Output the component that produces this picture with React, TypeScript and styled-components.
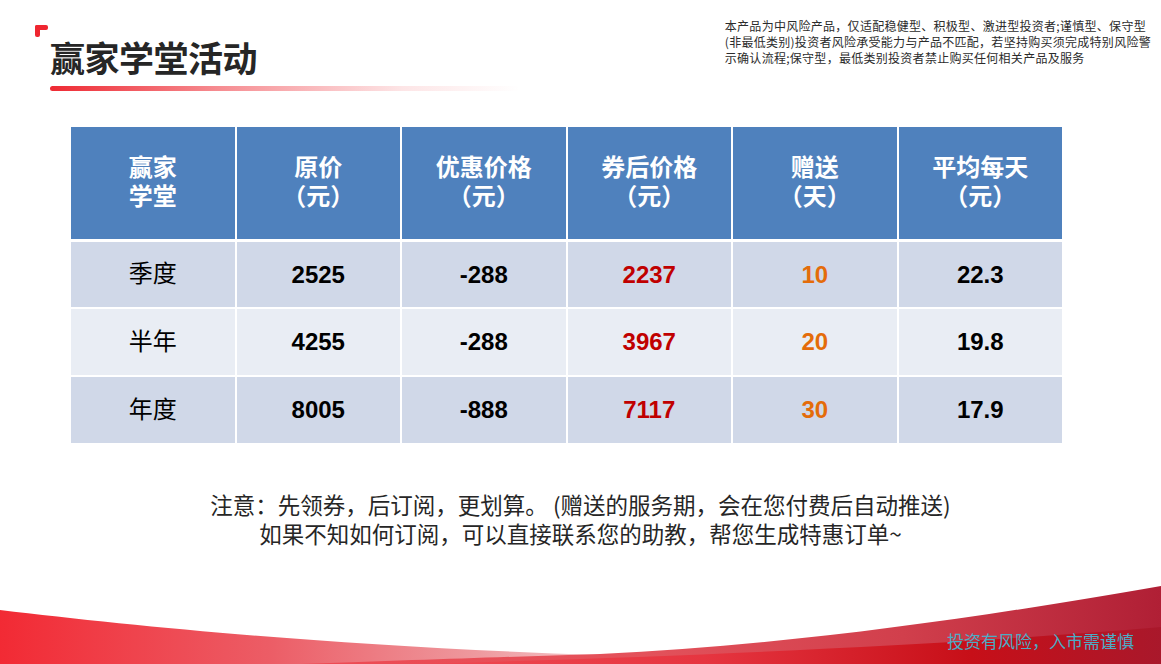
import React from 'react';
import styled, { createGlobalStyle } from 'styled-components';

const GlobalStyle = createGlobalStyle`
  html, body {
    margin: 0;
    padding: 0;
    background: #ffffff;
  }
  body {
    font-family: "Noto Sans CJK SC", "Liberation Sans", sans-serif;
  }
`;

const Page = styled.div`
  position: relative;
  width: 1161px;
  height: 664px;
  overflow: hidden;
  background: #ffffff;
  display: flex;
  flex-direction: column;
`;

const Header = styled.div`
  display: flex;
  justify-content: space-between;
  align-items: flex-start;
  height: 100px;
`;

const TitleBlock = styled.div`
  position: relative;
  padding: 36px 0 0 50px;
  display: flex;
  flex-direction: column;
`;

const CornerMark = styled.span`
  position: absolute;
  left: 35px;
  top: 25px;
  width: 13px;
  height: 12px;

  &::before,
  &::after {
    content: '';
    position: absolute;
    left: 0;
    top: 0;
    background: #ef2630;
    border-radius: 2px;
  }
  &::before {
    width: 13px;
    height: 5px;
  }
  &::after {
    width: 5px;
    height: 12px;
  }
`;

const Title = styled.h1`
  margin: 0;
  font-family: "Noto Sans CJK SC", sans-serif;
  font-size: 35px;
  line-height: 42px;
  font-weight: 700;
  letter-spacing: -0.5px;
  color: #262626;
`;

const TitleBar = styled.div`
  margin-top: 8px;
  width: 470px;
  height: 5px;
  border-radius: 3px;
  background: linear-gradient(90deg, #ee2a33 0%, rgba(238, 42, 51, 0.55) 35%, rgba(238, 42, 51, 0.12) 75%, rgba(238, 42, 51, 0) 100%);
`;

const Disclaimer = styled.div`
  margin: 18px 10px 0 0;
  font-family: "Noto Sans CJK SC", sans-serif;
  font-size: 12px;
  line-height: 16px;
  letter-spacing: 0.28px;
  color: #2b2b2b;
`;

const DisclaimerLine = styled.div`
  white-space: nowrap;
`;

const TableWrap = styled.div`
  margin: 27px 0 0 71px;
  width: 991px;
  display: flex;
  flex-direction: column;
`;

const Row = styled.div<{ $height: number; $gap: number }>`
  display: grid;
  grid-template-columns: repeat(6, 1fr);
  column-gap: 2px;
  height: ${(p) => p.$height}px;
  margin-bottom: ${(p) => p.$gap}px;
`;

const HeadCell = styled.div`
  background: #4f81bd;
  color: #ffffff;
  display: flex;
  flex-direction: column;
  align-items: center;
  justify-content: center;
  padding-bottom: 6px;
  box-sizing: border-box;
  text-align: center;
  font-family: "Noto Sans CJK SC", sans-serif;
  font-weight: 700;
  font-size: 24px;
`;

const HeadLine = styled.div`
  height: 29px;
  line-height: 29px;
  white-space: nowrap;
`;

const Cell = styled.div<{ $alt: boolean }>`
  background: ${(p) => (p.$alt ? '#e9edf4' : '#d0d8e8')};
  display: flex;
  align-items: center;
  justify-content: center;
`;

const Label = styled.span`
  font-family: "Noto Sans CJK SC", sans-serif;
  font-size: 24px;
  line-height: 30px;
  padding-bottom: 5px;
  color: #000000;
`;

const Num = styled.span<{ $color?: string }>`
  font-family: "Liberation Sans", Arial, sans-serif;
  font-weight: 700;
  font-size: 24px;
  color: ${(p) => p.$color || '#000000'};
`;

const Note = styled.div`
  margin-top: 47px;
  text-align: center;
  font-family: "Noto Sans CJK SC", sans-serif;
  font-size: 22.5px;
  line-height: 29px;
  color: #262626;
`;

const Footer = styled.div`
  margin-top: auto;
  position: relative;
  height: 84px;
  display: flex;
  justify-content: flex-end;
  align-items: flex-end;
  padding: 0 27px 13px 0;
  box-sizing: border-box;
`;

const Wave = styled.svg`
  position: absolute;
  left: 0;
  bottom: 0;
  width: 1161px;
  height: 84px;
`;

const RiskText = styled.span`
  position: relative;
  font-family: "Noto Sans CJK SC", sans-serif;
  font-size: 17px;
  line-height: 20px;
  color: #4bacc6;
`;

const headers = [
  ['赢家', '学堂'],
  ['原价', '（元）'],
  ['优惠价格', '（元）'],
  ['券后价格', '（元）'],
  ['赠送', '（天）'],
  ['平均每天', '（元）'],
];

const rows = [
  { name: '季度', price: '2525', off: '-288', after: '2237', gift: '10', daily: '22.3' },
  { name: '半年', price: '4255', off: '-288', after: '3967', gift: '20', daily: '19.8' },
  { name: '年度', price: '8005', off: '-888', after: '7117', gift: '30', daily: '17.9' },
];

const App: React.FC = () => {
  return (
    <Page>
      <GlobalStyle />
      <Header>
        <TitleBlock>
          <CornerMark />
          <Title>赢家学堂活动</Title>
          <TitleBar />
        </TitleBlock>
        <Disclaimer>
          <DisclaimerLine>本产品为中风险产品，仅适配稳健型、积极型、激进型投资者;谨慎型、保守型</DisclaimerLine>
          <DisclaimerLine>(非最低类别)投资者风险承受能力与产品不匹配，若坚持购买须完成特别风险警</DisclaimerLine>
          <DisclaimerLine>示确认流程;保守型，最低类别投资者禁止购买任何相关产品及服务</DisclaimerLine>
        </Disclaimer>
      </Header>

      <TableWrap>
        <Row $height={112} $gap={3}>
          {headers.map((h) => (
            <HeadCell key={h[0]}>
              <HeadLine>{h[0]}</HeadLine>
              <HeadLine>{h[1]}</HeadLine>
            </HeadCell>
          ))}
        </Row>
        {rows.map((r, i) => (
          <Row key={r.name} $height={i === 0 ? 65 : 66} $gap={i === rows.length - 1 ? 0 : 2}>
            <Cell $alt={i === 1}>
              <Label>{r.name}</Label>
            </Cell>
            <Cell $alt={i === 1}>
              <Num>{r.price}</Num>
            </Cell>
            <Cell $alt={i === 1}>
              <Num>{r.off}</Num>
            </Cell>
            <Cell $alt={i === 1}>
              <Num $color="#c00000">{r.after}</Num>
            </Cell>
            <Cell $alt={i === 1}>
              <Num $color="#e46c0a">{r.gift}</Num>
            </Cell>
            <Cell $alt={i === 1}>
              <Num>{r.daily}</Num>
            </Cell>
          </Row>
        ))}
      </TableWrap>

      <Note>
        注意：先领券，后订阅，更划算。 (赠送的服务期，会在您付费后自动推送)
        <br />
        如果不知如何订阅，可以直接联系您的助教，帮您生成特惠订单~
      </Note>

      <Footer>
        <Wave viewBox="0 580 1161 84" preserveAspectRatio="none">
          <defs>
            <linearGradient id="fadeRed" x1="0" y1="0" x2="600" y2="0" gradientUnits="userSpaceOnUse">
              <stop offset="0" stopColor="#f22a34" />
              <stop offset="0.45" stopColor="#ec5d66" />
              <stop offset="0.8" stopColor="#ee9a9f" />
              <stop offset="1" stopColor="#f4c8cb" />
            </linearGradient>
            <linearGradient id="bandRed" x1="300" y1="0" x2="1161" y2="0" gradientUnits="userSpaceOnUse">
              <stop offset="0" stopColor="#ee4a53" />
              <stop offset="0.4" stopColor="#e3525b" />
              <stop offset="0.7" stopColor="#d13f4c" />
              <stop offset="1" stopColor="#b01f35" />
            </linearGradient>
            <linearGradient id="deepRed" x1="400" y1="0" x2="1161" y2="0" gradientUnits="userSpaceOnUse">
              <stop offset="0" stopColor="#ef4a53" />
              <stop offset="0.4" stopColor="#e63540" />
              <stop offset="0.75" stopColor="#c70f18" />
              <stop offset="1" stopColor="#a9182b" />
            </linearGradient>
          </defs>
          <path d="M0,610 C150,628 350,647 600,655 L600,664 L0,664 Z" fill="url(#fadeRed)" />
          <path d="M300,664 C420,660 500,657 600,654 C800,645 1000,614 1161,586 L1161,664 Z" fill="url(#bandRed)" />
          <path d="M420,664 C700,656 950,645 1161,627 L1161,664 Z" fill="url(#deepRed)" />
        </Wave>
        <RiskText>投资有风险，入市需谨慎</RiskText>
      </Footer>
    </Page>
  );
};

export default App;
